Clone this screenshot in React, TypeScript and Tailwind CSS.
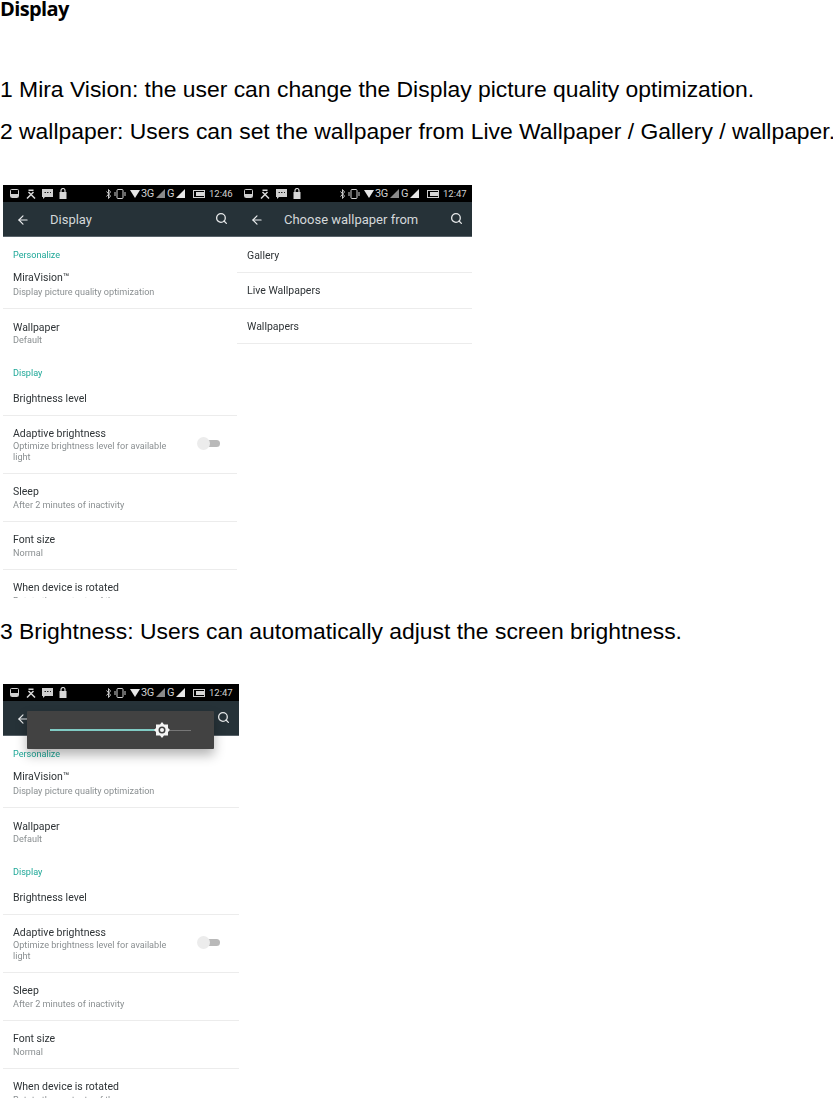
import { ArrowLeft, Search } from "lucide-react";

function Signal({ dim }: { dim?: boolean }) {
  return (
    <svg width="9" height="9" viewBox="0 0 9 9" className="shrink-0">
      <path d="M0 9 L9 0 V9 Z" fill={dim ? "#8a8a8a" : "#e8e8e8"} />
    </svg>
  );
}

function StatusBar({ time }: { time: string }) {
  return (
    <div className="h-[17px] bg-black flex items-center pl-[7px] text-[#d0d0d0] font-['Roboto',sans-serif] text-[10px] leading-none">
      <svg width="9" height="9" viewBox="0 0 9 9" className="shrink-0">
        <rect x="0.5" y="0.5" width="8" height="8" rx="1" fill="none" stroke="#d0d0d0" />
        <rect x="1" y="5" width="7" height="3" fill="#d0d0d0" />
      </svg>
      <svg width="10" height="10" viewBox="0 0 10 10" className="ml-[7px] shrink-0">
        <path d="M1 9.5 L7.5 3 M9 9.5 L2.5 3" stroke="#d8d8d8" strokeWidth="1.5" />
        <rect x="2.5" y="0.5" width="5" height="1.5" fill="#d8d8d8" />
      </svg>
      <svg width="11" height="10" viewBox="0 0 11 10" className="ml-[6px] shrink-0">
        <path d="M0 0 H11 V8 H3 L1 10 V8 H0 Z" fill="#d0d0d0" />
        <path d="M2.5 3.5 H4 M5 3.5 H6.5 M8 3.5 H9" stroke="#222" strokeWidth="1.2" />
      </svg>
      <svg width="8" height="11" viewBox="0 0 8 11" className="ml-[6px] shrink-0">
        <rect x="0.5" y="4" width="7" height="7" fill="#d8d8d8" />
        <path d="M2 4 V2.5 a2 2 0 0 1 4 0 V4" fill="none" stroke="#d8d8d8" strokeWidth="1.2" />
      </svg>
      <svg width="5" height="10" viewBox="0 0 5 10" className="ml-[39px] shrink-0">
        <path d="M0.5 2.5 L4.5 7 L2.5 9.5 V0.5 L4.5 3 L0.5 7.5" fill="none" stroke="#c8c8c8" />
      </svg>
      <svg width="12" height="10" viewBox="0 0 12 10" className="ml-[3px] shrink-0">
        <rect x="3" y="0.5" width="6" height="9" rx="1" fill="none" stroke="#d0d0d0" />
        <path d="M1 3 V7 M11 3 V7" stroke="#d0d0d0" />
      </svg>
      <svg width="10" height="8" viewBox="0 0 10 8" className="ml-[4px] shrink-0">
        <path d="M0 0 H10 L5 8 Z" fill="#e8e8e8" />
      </svg>
      <span className="ml-[1px] w-[13px] text-[11px] tracking-[-0.5px]">3G</span>
      <span className="ml-[2px]"><Signal dim /></span>
      <span className="ml-[2px] w-[8px] text-[11px]">G</span>
      <span className="ml-[1px]"><Signal /></span>
      <svg width="12" height="8" viewBox="0 0 12 8" className="ml-[8px] shrink-0">
        <rect x="0.5" y="0.5" width="11" height="7" fill="none" stroke="#d0d0d0" />
        <rect x="3" y="2" width="8" height="4" fill="#d8d8d8" />
      </svg>
      <span className="ml-[4px] text-[9.5px]">{time}</span>
    </div>
  );
}

function AppBar({ title, titleClass }: { title: string; titleClass: string }) {
  return (
    <div className="h-[35px] bg-[#263238] flex items-center pl-[13px] pr-[9px] text-[#d4d8da] border-b border-[#59636a] font-['Roboto',sans-serif]">
      <ArrowLeft size={14} strokeWidth={2} className="shrink-0 mt-[1px] text-[#eceeef]" />
      <span className={titleClass}>{title}</span>
      <Search size={13} strokeWidth={2.4} className="ml-auto shrink-0 text-[#e6e8e9] -mt-[1px]" />
    </div>
  );
}

function Pref({
  title,
  sub,
  cls,
  subCls = "mt-[1px]",
  toggle,
}: {
  title: string;
  sub?: string;
  cls: string;
  subCls?: string;
  toggle?: boolean;
}) {
  return (
    <div className={`relative pl-[10px] pr-[66px] ${cls}`}>
      <div className="text-[10.5px] leading-[13px] text-[#2e3336]">{title}</div>
      {sub && <div className={`text-[9.1px] leading-[11px] text-[#8a8f91] ${subCls}`}>{sub}</div>}
      {toggle && (
        <div className="absolute left-[194px] top-[21px] flex items-center">
          <div className="w-[13px] h-[13px] rounded-full bg-[#ececec] z-10" />
          <div className="w-[17px] h-[7px] -ml-[7px] rounded-r-full bg-[#b9b9b9]" />
        </div>
      )}
    </div>
  );
}

function Settings() {
  return (
    <div className="font-['Roboto',sans-serif]">
      <div className="pt-[13px] pb-[6px] pl-[10px] text-[9.1px] leading-[10px] text-[#1fa898]">Personalize</div>
      <Pref title="MiraVision™" sub="Display picture quality optimization" subCls="mt-[3px]" cls="h-[43px] pt-[5px] border-b border-[#ececec]" />
      <Pref title="Wallpaper" sub="Default" subCls="mt-[1px]" cls="h-[47px] pt-[12px]" />
      <div className="pt-[12px] pl-[10px] text-[9.1px] leading-[10px] text-[#1fa898]">Display</div>
      <Pref title="Brightness level" cls="h-[38px] pt-[14px] border-b border-[#ececec]" />
      <Pref
        title="Adaptive brightness"
        sub="Optimize brightness level for available light"
        cls="h-[58px] pt-[11px] border-b border-[#ececec]"
        toggle
      />
      <Pref title="Sleep" sub="After 2 minutes of inactivity" subCls="mt-[2px]" cls="h-[48px] pt-[11px] border-b border-[#ececec]" />
      <Pref title="Font size" sub="Normal" subCls="mt-[2px]" cls="h-[48px] pt-[11px] border-b border-[#ececec]" />
      <Pref title="When device is rotated" sub="Rotate the contents of the screen" subCls="mt-[2px]" cls="pt-[11px]" />
    </div>
  );
}

function WallRow({ label, cls }: { label: string; cls: string }) {
  return (
    <div className={`flex items-center pl-[10px] text-[10.5px] text-[#2e3336] border-b border-[#ececec] ${cls}`}>
      {label}
    </div>
  );
}

export default function App() {
  return (
    <div className="w-[833px] h-[1098px] overflow-hidden bg-white text-black font-['Liberation_Sans',Arial,sans-serif]">
      <h1 className="h-[68px] text-[20px] leading-[18px] font-bold font-['Open_Sans',sans-serif] tracking-[-0.6px]">Display</h1>
      <p className="h-[42px] text-[22.9px] leading-[42px] whitespace-nowrap">
        1 Mira Vision: the user can change the Display picture quality optimization.
      </p>
      <p className="h-[42px] text-[22.9px] leading-[42px] whitespace-nowrap">
        2 wallpaper: Users can set the wallpaper from Live Wallpaper / Gallery / wallpaper.
      </p>
      <div className="mt-[33px] ml-[3px] flex h-[413px] blur-[0.35px]">
        <div className="w-[234px] h-[413px] overflow-hidden">
          <StatusBar time="12:46" />
          <AppBar title="Display" titleClass="ml-[20px] mt-[1px] text-[13px]" />
          <Settings />
        </div>
        <div className="w-[235px] h-[413px] overflow-hidden font-['Roboto',sans-serif]">
          <StatusBar time="12:47" />
          <AppBar title="Choose wallpaper from" titleClass="ml-[20px] mt-[1px] text-[13px]" />
          <WallRow label="Gallery" cls="h-[36px] pt-[2px]" />
          <WallRow label="Live Wallpapers" cls="h-[36px]" />
          <WallRow label="Wallpapers" cls="h-[35px] pt-[1px]" />
        </div>
      </div>
      <p className="mt-[12px] h-[42px] text-[22.9px] leading-[42px] whitespace-nowrap">
        3 Brightness: Users can automatically adjust the screen brightness.
      </p>
      <div className="relative mt-[32px] ml-[3px] w-[236px] h-[414px] overflow-hidden blur-[0.35px]">
        <StatusBar time="12:47" />
        <AppBar title="" titleClass="" />
        <Settings />
        <div className="absolute left-[24px] top-[27px] w-[187px] h-[38px] bg-[#424242] rounded-[1px] shadow-[0_6px_12px_rgba(0,0,0,0.3)] flex items-center pl-[23px]">
          <div className="w-[112px] h-[2px] bg-[#80cbc4]" />
          <svg width="16" height="16" viewBox="0 0 16 16" className="-ml-[8px] z-10 shrink-0">
            <path d="M8 0 L10 2.5 L14 2.5 L14 6 L16 8 L14 10 L14 13.5 L10 13.5 L8 16 L6 13.5 L2 13.5 L2 10 L0 8 L2 6 L2 2.5 L6 2.5 Z" fill="#f5f5f5" />
            <circle cx="8" cy="8" r="3.5" fill="#424242" />
            <circle cx="8" cy="8" r="2" fill="#f5f5f5" />
          </svg>
          <div className="w-[21px] h-[1px] bg-[#777]" />
        </div>
      </div>
    </div>
  );
}
